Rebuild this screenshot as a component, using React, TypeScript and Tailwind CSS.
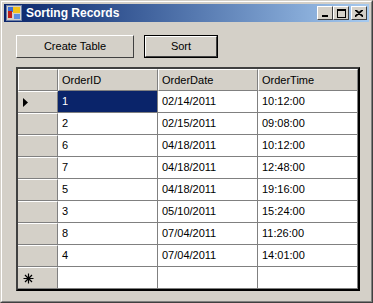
import type { ReactNode } from "react";

type Row = { id: string; date: string; time: string };

const rows: Row[] = [
  { id: "1", date: "02/14/2011", time: "10:12:00" },
  { id: "2", date: "02/15/2011", time: "09:08:00" },
  { id: "6", date: "04/18/2011", time: "10:12:00" },
  { id: "7", date: "04/18/2011", time: "12:48:00" },
  { id: "5", date: "04/18/2011", time: "19:16:00" },
  { id: "3", date: "05/10/2011", time: "15:24:00" },
  { id: "8", date: "07/04/2011", time: "11:26:00" },
  { id: "4", date: "07/04/2011", time: "14:01:00" },
];

function CaptionButton({ children, className }: { children: ReactNode; className?: string }) {
  return (
    <div
      className={`flex h-[14px] w-[16px] items-center justify-center border border-t-white border-l-white border-r-[#404040] border-b-[#404040] bg-[#d4d0c8] ${className ?? ""}`}
    >
      {children}
    </div>
  );
}

function Button({ label, width, isDefault }: { label: string; width: string; isDefault?: boolean }) {
  return (
    <div className={`${isDefault ? "border border-black" : ""}`}>
      <div
        className={`flex ${width} ${isDefault ? "h-[21px]" : "h-[23px]"} items-center justify-center border border-t-white border-l-white border-r-[#404040] border-b-[#404040] bg-[#d4d0c8] text-[11px] text-black`}
      >
        {label}
      </div>
    </div>
  );
}

function RowHeader({ children }: { children?: ReactNode }) {
  return (
    <div className="flex h-[22px] w-[40px] items-center border-t border-t-white border-r border-r-[#808080] border-b border-b-[#808080] bg-[#d4d0c8] pl-[5px]">
      {children}
    </div>
  );
}

function Cell({ text, selected }: { text?: string; selected?: boolean }) {
  return (
    <div
      className={`flex h-[22px] w-[100px] items-center border-r border-b border-[#808080] pl-[4px] ${
        selected ? "bg-[#0a246a] text-white" : "bg-white text-black"
      }`}
    >
      {text}
    </div>
  );
}

export default function App() {
  return (
    <div
      className="h-[303px] w-[373px] border border-t-[#d4d0c8] border-l-[#d4d0c8] border-r-[#404040] border-b-[#404040] bg-[#d4d0c8]"
      style={{ fontFamily: '"Liberation Sans", Arial, sans-serif' }}
    >
      <div className="flex h-full w-full flex-col border border-t-white border-l-white border-r-[#808080] border-b-[#808080] p-[2px]">
        {/* Title bar */}
        <div className="flex h-[18px] items-center bg-gradient-to-r from-[#0a246a] to-[#a6caf0] pr-[2px] pl-[2px]">
          <svg width="16" height="16" viewBox="0 0 16 16" className="shrink-0">
            <rect x="0.5" y="0.5" width="15" height="15" fill="#d4d0c8" stroke="#6b7fa8" />
            <rect x="2" y="2" width="5" height="5" fill="#3a6ed8" />
            <rect x="2" y="6" width="4" height="7" fill="#c0201a" />
            <rect x="7" y="2" width="7" height="6" fill="#f2c21a" />
            <rect x="8" y="9" width="6" height="5" fill="#5b8fe0" />
          </svg>
          <span className="ml-[4px] text-[12px] leading-none font-bold text-white">Sorting Records</span>
          <div className="ml-auto flex items-center">
            <CaptionButton>
              <div className="mt-[6px] h-[2px] w-[6px] bg-black" />
            </CaptionButton>
            <CaptionButton>
              <div className="h-[9px] w-[9px] border border-t-2 border-black" />
            </CaptionButton>
            <CaptionButton className="ml-[2px]">
              <svg width="8" height="7" viewBox="0 0 8 7">
                <path d="M0 0 L8 7 M1 0 L8 6 M8 0 L0 7 M7 0 L0 6" stroke="black" strokeWidth="1.2" />
              </svg>
            </CaptionButton>
          </div>
        </div>

        {/* Client area */}
        <div className="flex flex-col pt-[13px] pl-[12px] text-[11px]">
          <div className="flex gap-[10px]">
            <Button label="Create Table" width="w-[118px]" />
            <Button label="Sort" width="w-[72px]" isDefault />
          </div>

          <div className="mt-[9px] w-fit border-2 border-t-[#404040] border-l-[#404040] border-r-black border-b-black bg-[#808080]">
            {/* Column headers */}
            <div className="flex">
              <div className="h-[22px] w-[40px] border-t border-l border-t-white border-l-white border-r border-b border-[#808080] bg-[#d4d0c8]" />
              {["OrderID", "OrderDate", "OrderTime"].map((h) => (
                <div
                  key={h}
                  className="flex h-[22px] w-[100px] items-center border-t border-l border-t-white border-l-white border-r border-b border-r-[#808080] border-b-[#808080] bg-[#d4d0c8] pl-[3px] text-black"
                >
                  {h}
                </div>
              ))}
            </div>

            {rows.map((r, i) => (
              <div key={r.id} className="flex">
                <RowHeader>
                  {i === 0 && (
                    <svg width="5" height="9" viewBox="0 0 5 9">
                      <path d="M0 0 L5 4.5 L0 9 Z" fill="black" />
                    </svg>
                  )}
                </RowHeader>
                <Cell text={r.id} selected={i === 0} />
                <Cell text={r.date} />
                <Cell text={r.time} />
              </div>
            ))}

            <div className="flex">
              <RowHeader>
                <svg width="11" height="11" viewBox="0 0 11 11">
                  <path
                    d="M5.5 0.5 V10.5 M0.5 5.5 H10.5 M2 2 L9 9 M9 2 L2 9"
                    stroke="black"
                    strokeWidth="1.2"
                  />
                </svg>
              </RowHeader>
              <Cell />
              <Cell />
              <Cell />
            </div>
          </div>
        </div>
      </div>
    </div>
  );
}
